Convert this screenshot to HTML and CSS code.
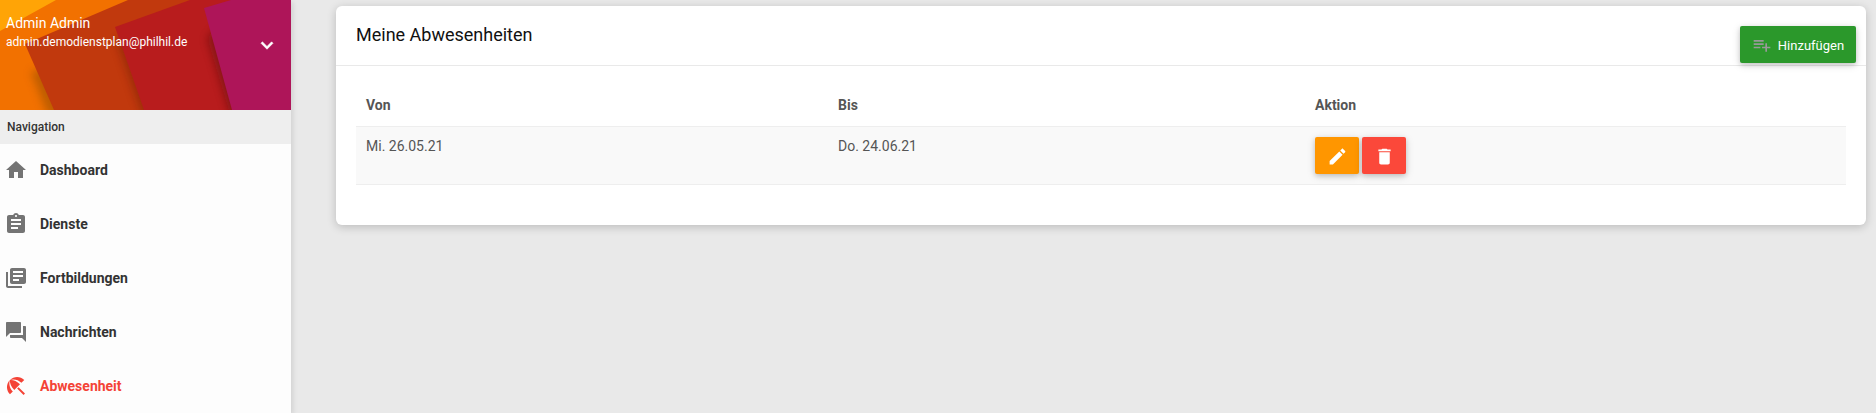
FILE: index.html
```html
<!DOCTYPE html>
<html lang="de">
<head>
<meta charset="utf-8">
<title>Meine Abwesenheiten</title>
<link rel="stylesheet" href="styles.css">
</head>
<body>
<aside class="sidebar">
  <div class="user">
    <svg class="user-bg" viewBox="0 0 291 110" preserveAspectRatio="none" aria-hidden="true">
      <defs><filter id="soft" x="-30%" y="-30%" width="160%" height="160%"><feGaussianBlur stdDeviation="4"/></filter></defs>
      <rect width="291" height="110" fill="#f27100"/>
      <path d="M0 0H56L0 31Z" fill="#ffa406"/>
      <path d="M31 72L50 66L70 115H48Z" fill="#8a4a00" opacity=".5" filter="url(#soft)"/>
      <path d="M25 44L128 0H291V110H54Z" fill="#c1390d"/>
      <path d="M116 40L134 34L156 115H142Z" fill="#5a1505" opacity=".35" filter="url(#soft)"/>
      <path d="M115 27L190 0H291V110H144Z" fill="#b81c1d"/>
      <path d="M207 38L222 20L245 115H230Z" fill="#500808" opacity=".45" filter="url(#soft)"/>
      <path d="M204 8L231 0H291V110H232Z" fill="#ae1559"/>
    </svg>
    <div class="user-info">
      <div class="name">Admin Admin</div>
      <div class="email">admin.demodienstplan@philhil.de</div>
    </div>
    <svg class="chevron" viewBox="0 0 24 24"><path d="M7.41 7.84L12 12.42l4.59-4.58L18 9.25l-6 6-6-6z"/></svg>
  </div>
  <div class="nav-title">Navigation</div>
  <nav class="menu">
    <a class="item"><svg viewBox="0 0 24 24"><path d="M10 20v-6h4v6h5v-8h3L12 3 2 12h3v8z"/></svg><span>Dashboard</span></a>
    <a class="item"><svg viewBox="0 0 24 24"><path d="M19 3h-4.18C14.4 1.84 13.3 1 12 1c-1.3 0-2.4.84-2.82 2H5c-1.1 0-2 .9-2 2v14c0 1.1.9 2 2 2h14c1.1 0 2-.9 2-2V5c0-1.1-.9-2-2-2zm-7 0c.55 0 1 .45 1 1s-.45 1-1 1-1-.45-1-1 .45-1 1-1zm2 14H7v-2h7v2zm3-4H7v-2h10v2zm0-4H7V7h10v2z"/></svg><span>Dienste</span></a>
    <a class="item"><svg viewBox="0 0 24 24"><path d="M4 6H2v14c0 1.1.9 2 2 2h14v-2H4V6zm16-4H8c-1.1 0-2 .9-2 2v12c0 1.1.9 2 2 2h12c1.1 0 2-.9 2-2V4c0-1.1-.9-2-2-2zm-1 9H9V9h10v2zm-4 4H9v-2h6v2zm4-8H9V5h10v2z"/></svg><span>Fortbildungen</span></a>
    <a class="item"><svg viewBox="0 0 24 24"><path d="M21 6h-2v9H6v2c0 .55.45 1 1 1h11l4 4V7c0-.55-.45-1-1-1zm-4 6V3c0-.55-.45-1-1-1H3c-.55 0-1 .45-1 1v14l4-4h10c.55 0 1-.45 1-1z"/></svg><span>Nachrichten</span></a>
    <a class="item active"><svg viewBox="0 0 24 24"><path d="M13.127 14.56l1.43-1.43 6.44 6.443L19.57 21zm4.293-5.73l2.86-2.86c-3.95-3.95-10.35-3.96-14.3-.02 3.93-1.3 8.31-.25 11.44 2.88zM5.95 5.98c-3.94 3.95-3.93 10.35.02 14.3l2.86-2.86C5.7 14.29 4.65 9.91 5.95 5.98zm.02-.02l-.01.01c-.38 3.01 1.17 6.88 4.3 10.02l5.73-5.73c-3.13-3.13-7.01-4.68-10.02-4.3z"/></svg><span>Abwesenheit</span></a>
  </nav>
</aside>
<main class="content">
  <section class="card">
    <header class="card-head">
      <h2>Meine Abwesenheiten</h2>
      <button class="btn add"><svg viewBox="0 0 24 24"><path d="M14 10H2v2h12v-2zm0-4H2v2h12V6zm4 8v-4h-2v4h-4v2h4v4h2v-4h4v-2h-4zM2 16h8v-2H2v2z"/></svg><span>Hinzufügen</span></button>
    </header>
    <div class="card-body">
      <table>
        <colgroup><col class="c-from"><col class="c-to"><col></colgroup>
        <thead><tr><th>Von</th><th>Bis</th><th>Aktion</th></tr></thead>
        <tbody><tr>
          <td>Mi. 26.05.21</td>
          <td>Do. 24.06.21</td>
          <td class="action-cell"><div class="actions">
            <button class="btn edit" aria-label="Bearbeiten"><svg viewBox="0 0 24 24"><path d="M3 17.25V21h3.75L17.81 9.94l-3.75-3.75L3 17.25zM20.71 7.04c.39-.39.39-1.02 0-1.41l-2.34-2.34c-.39-.39-1.02-.39-1.41 0l-1.83 1.83 3.75 3.75 1.83-1.83z"/></svg></button>
            <button class="btn delete" aria-label="Löschen"><svg viewBox="0 0 24 24"><path d="M6 19c0 1.1.9 2 2 2h8c1.1 0 2-.9 2-2V7H6v12zM19 4h-3.5l-1-1h-5l-1 1H5v2h14V4z"/></svg></button>
          </div></td>
        </tr></tbody>
      </table>
    </div>
  </section>
</main>
</body>
</html>
```
FILE: styles.css
```css
* { box-sizing: border-box; }
body {
  margin: 0;
  height: 413px;
  overflow: hidden;
  display: flex;
  background: #e9e9e9;
  font-family: Roboto, "Liberation Sans", sans-serif;
  font-size: 14px;
  line-height: 20px;
  color: #555;
}
svg { display: block; fill: currentColor; flex: none; }

.sidebar {
  width: 291px;
  flex: none;
  height: 413px;
  background: #fdfdfd;
  box-shadow: 2px 2px 5px rgba(0, 0, 0, .1);
}
.user {
  position: relative;
  height: 110px;
  padding: 13px 12px 0 6px;
  display: flex;
  justify-content: space-between;
  color: #fff;
}
.user-bg { position: absolute; inset: 0; width: 100%; height: 100%; }
.user-info { position: relative; }
.name { font-size: 14px; }
.email { font-size: 12px; line-height: 19px; }
.chevron { position: relative; width: 24px; height: 24px; margin-top: 21px; stroke: #fff; stroke-width: .6; }
.nav-title {
  height: 34px;
  padding: 0 7px;
  background: #eee;
  color: #333;
  font-size: 12px;
  font-weight: 500;
  line-height: 34px;
}
.item {
  display: flex;
  align-items: center;
  gap: 12px;
  height: 54px;
  padding: 0 4px;
  color: #747474;
}
.menu { margin-top: -1px; }
.item svg { width: 24px; height: 24px; }
.item span { color: #333; font-weight: 700; }
.item.active, .item.active span { color: #f44336; }

.content { flex: 1; padding: 6px 10px 0 45px; }
.card {
  height: 219px;
  background: #fff;
  border-radius: 6px;
  box-shadow: 0 2px 10px rgba(0, 0, 0, .2);
}
.card-head {
  display: flex;
  justify-content: space-between;
  align-items: flex-start;
  height: 60px;
  padding: 20px 10px 0 20px;
  border-bottom: 1px solid #e9e9e9;
}
h2 { margin: 0; font-size: 18px; line-height: 18px; font-weight: 400; color: #111; }
.card-body { padding: 20px; }

.btn {
  display: flex;
  align-items: center;
  justify-content: center;
  height: 37px;
  padding: 0;
  border: 0;
  border-radius: 2px;
  color: #fff;
  font: 400 13px/18px Roboto, sans-serif;
  box-shadow: 0 2px 5px rgba(0, 0, 0, .16), 0 2px 10px rgba(0, 0, 0, .12);
}
.add { width: 116px; gap: 6px; background: #2b982b; }
.add svg { width: 20px; height: 20px; color: #999; }
.add span { padding-top: 2px; }
.edit { width: 44px; background: #ff9600; }
.delete { width: 44px; background: #fb483a; }
.edit svg, .delete svg { width: 21px; height: 21px; margin-top: 1px; }
.actions { display: flex; gap: 3px; }

table { width: 100%; table-layout: fixed; border-collapse: separate; border-spacing: 0; }
.c-from { width: 472px; }
.c-to { width: 477px; }
th, td { padding: 9px 10px 11px; text-align: left; vertical-align: top; border-bottom: 1px solid #eee; }
th { font-weight: 700; }
td { background: #f9f9f9; }
.action-cell { padding: 10px; }
```
